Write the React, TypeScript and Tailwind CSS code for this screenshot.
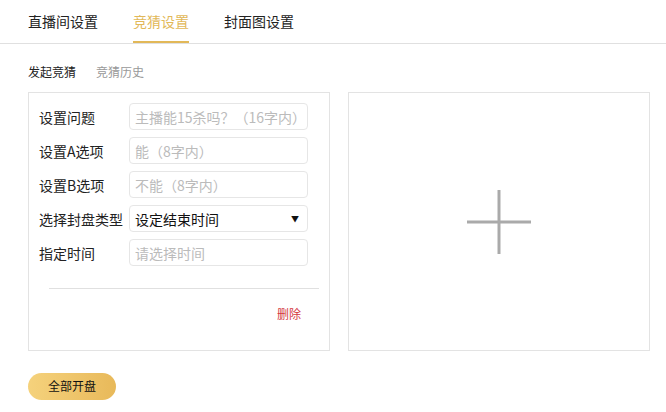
export default function App() {
  const tabs = ['直播间设置', '竞猜设置', '封面图设置'];
  const rows = [
    { label: '设置问题', placeholder: '主播能15杀吗？（16字内）' },
    { label: '设置A选项', placeholder: '能（8字内）' },
    { label: '设置B选项', placeholder: '不能（8字内）' },
  ];

  return (
    <div className="w-[666px] h-[412px] bg-white text-[#333] [text-spacing-trim:space-all] font-['Microsoft_YaHei','Noto_Sans_CJK_SC',sans-serif]">
      {/* Top tabs */}
      <div className="flex gap-[35px] pl-[28px] h-[44px] border-b border-[#e0e0e0]">
        {tabs.map((t, i) => (
          <div
            key={t}
            className={`h-[43px] flex items-center text-[14px] leading-[16px] border-b-2 ${
              i === 1 ? 'border-[#e2b858] text-[#e2b858]' : 'border-transparent text-[#222]'
            }`}
          >
            {t}
          </div>
        ))}
      </div>

      {/* Sub tabs */}
      <div className="flex gap-[20px] pl-[28px] pt-[20px] text-[12px] leading-[16px]">
        <span className="text-[#222]">发起竞猜</span>
        <span className="text-[#999]">竞猜历史</span>
      </div>

      {/* Panels */}
      <div className="flex gap-[18px] pl-[28px] mt-[12px]">
        <div className="w-[302px] h-[259px] border border-[#e3e3e3] flex flex-col">
          <div className="flex flex-col gap-[7px] pt-[10px] pl-[10px]">
            {rows.map((r) => (
              <div key={r.label} className="flex items-center">
                <span className="w-[90px] text-[14px] leading-[16px] text-[#222]">{r.label}</span>
                <input
                  readOnly
                  placeholder={r.placeholder}
                  className="w-[179px] h-[27px] border border-[#e6e6e6] rounded-[4px] px-[5px] text-[14px] outline-none [text-spacing-trim:space-all] placeholder:text-[#bbb]"
                />
              </div>
            ))}
            <div className="flex items-center">
              <span className="w-[90px] text-[14px] leading-[16px] text-[#222] whitespace-nowrap">选择封盘类型</span>
              <div className="w-[179px] h-[27px] border border-[#e6e6e6] rounded-[4px] pl-[5px] pr-[8px] flex items-center justify-between">
                <span className="text-[14px] leading-[16px] text-[#111]">设定结束时间</span>
                <span className="text-[8px] leading-[10px] text-[#111]">▼</span>
              </div>
            </div>
            <div className="flex items-center">
              <span className="w-[90px] text-[14px] leading-[16px] text-[#222]">指定时间</span>
              <input
                readOnly
                placeholder="请选择时间"
                className="w-[179px] h-[27px] border border-[#e6e6e6] rounded-[4px] px-[5px] text-[14px] outline-none placeholder:text-[#bbb]"
              />
            </div>
          </div>
          <div className="mt-[22px] ml-[20px] mr-[10px] border-t border-[#e0e0e0]" />
          <div className="flex justify-end pr-[28px] pt-[17px]">
            <span className="text-[12px] leading-[16px] text-[#d4383e]">删除</span>
          </div>
        </div>

        <div className="w-[302px] h-[259px] border border-[#e3e3e3] flex items-center justify-center">
          <svg width="64" height="64" viewBox="0 0 64 64">
            <line x1="0" y1="32" x2="64" y2="32" stroke="#aaa" strokeWidth="3" />
            <line x1="32" y1="0" x2="32" y2="64" stroke="#aaa" strokeWidth="3" />
          </svg>
        </div>
      </div>

      {/* Bottom button */}
      <div className="pl-[28px] mt-[21px]">
        <button className="w-[88px] h-[27px] rounded-full bg-gradient-to-r from-[#f5d27c] to-[#e8b95a] text-[12px] leading-[16px] text-[#111]">
          全部开盘
        </button>
      </div>
    </div>
  );
}
